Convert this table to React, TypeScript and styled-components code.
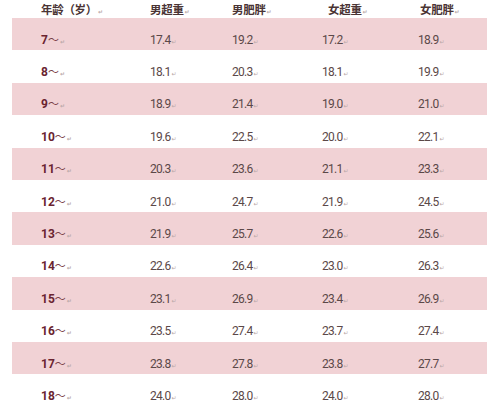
import styled, { createGlobalStyle } from "styled-components";

const GlobalStyle = createGlobalStyle`
  html, body {
    margin: 0;
    padding: 0;
    background: #ffffff;
  }
  body {
    width: 500px;
    height: 400px;
    overflow: hidden;
  }
`;

const Table = styled.div`
  display: flex;
  flex-direction: column;
  margin: 0 13px 0 12px;
`;

const COLS = "109px 82px 90px 96px 1fr";

const HeaderRow = styled.div`
  display: grid;
  grid-template-columns: ${COLS};
  height: 18px;
  align-items: center;
  padding-left: 29px;
`;

const HeadCell = styled.div<{ $shift?: number }>`
  font-family: "Noto Sans CJK SC", sans-serif;
  font-weight: 700;
  font-size: 11.5px;
  color: #4a3434;
  letter-spacing: -0.3px;
  margin-left: ${({ $shift }) => $shift ?? 0}px;
  line-height: 1;
  padding-top: 1px;
`;

const Row = styled.div<{ $pink: boolean }>`
  display: grid;
  grid-template-columns: ${COLS};
  height: 32.4px;
  align-items: center;
  padding: 11px 0 0 29px;
  box-sizing: border-box;
  background: ${({ $pink }) => ($pink ? "#f1d2d5" : "#ffffff")};
`;

const AgeCell = styled.div`
  font-family: Roboto, "Noto Sans CJK SC", sans-serif;
  font-weight: 700;
  font-size: 12px;
  color: #6a2430;
  line-height: 1;
`;

const ValueCell = styled.div`
  font-family: Roboto, sans-serif;
  font-size: 12px;
  letter-spacing: -0.7px;
  color: #5b4848;
  line-height: 1;
`;

const Tilde = styled.span`
  font-family: "Noto Sans CJK SC", sans-serif;
  font-weight: 400;
  font-size: 11px;
  color: #7a4048;
`;

const Mark = styled.span`
  font-family: "DejaVu Sans", sans-serif;
  font-size: 6px;
  color: #b9a8a8;
  margin-left: 1px;
  letter-spacing: 0;
`;

const rows: [string, string, string, string, string][] = [
  ["7", "17.4", "19.2", "17.2", "18.9"],
  ["8", "18.1", "20.3", "18.1", "19.9"],
  ["9", "18.9", "21.4", "19.0", "21.0"],
  ["10", "19.6", "22.5", "20.0", "22.1"],
  ["11", "20.3", "23.6", "21.1", "23.3"],
  ["12", "21.0", "24.7", "21.9", "24.5"],
  ["13", "21.9", "25.7", "22.6", "25.6"],
  ["14", "22.6", "26.4", "23.0", "26.3"],
  ["15", "23.1", "26.9", "23.4", "26.9"],
  ["16", "23.5", "27.4", "23.7", "27.4"],
  ["17", "23.8", "27.8", "23.8", "27.7"],
  ["18", "24.0", "28.0", "24.0", "28.0"],
];

const headers = ["年龄（岁）", "男超重", "男肥胖", "女超重", "女肥胖"];
const headShift = [0, 0, 0, 6, 2];

export default function App() {
  return (
    <>
      <GlobalStyle />
      <Table>
        <HeaderRow>
          {headers.map((h, i) => (
            <HeadCell key={h} $shift={headShift[i]}>
              {h}
              <Mark>↵</Mark>
            </HeadCell>
          ))}
        </HeaderRow>
        {rows.map((r, i) => (
          <Row key={r[0]} $pink={i % 2 === 0}>
            <AgeCell>
              {r[0]}
              <Tilde>～</Tilde>
              <Mark>↵</Mark>
            </AgeCell>
            {r.slice(1).map((v, j) => (
              <ValueCell key={j}>
                {v}
                <Mark>↵</Mark>
              </ValueCell>
            ))}
          </Row>
        ))}
      </Table>
    </>
  );
}
